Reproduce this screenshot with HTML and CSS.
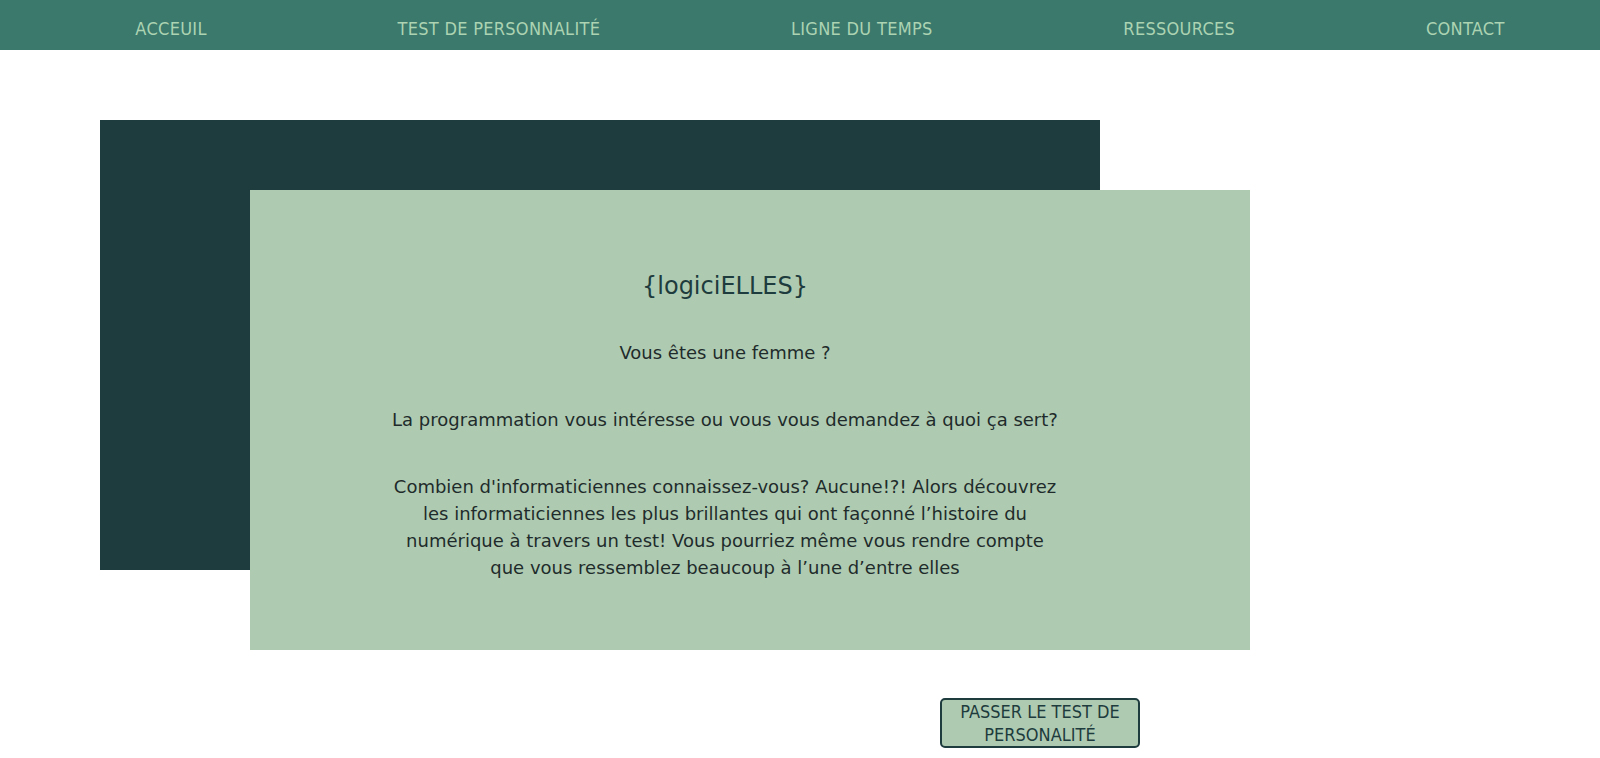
FILE: index.html
```html
<!DOCTYPE html>
<html lang="fr">
<head>
<meta charset="utf-8">
<title>logiciELLES</title>
<link rel="stylesheet" href="styles.css">
</head>
<body>
<nav class="topnav">
  <ul class="topnav-list">
    <li><a href="#">ACCEUIL</a></li>
    <li><a href="#">TEST DE PERSONNALITÉ</a></li>
    <li><a href="#">LIGNE DU TEMPS</a></li>
    <li><a href="#">RESSOURCES</a></li>
    <li><a href="#">CONTACT</a></li>
  </ul>
</nav>
<main class="hero">
  <div class="hero-back"></div>
  <section class="hero-card">
    <h1 class="hero-title">{logiciELLES}</h1>
    <p class="hero-text">Vous êtes une femme ?</p>
    <p class="hero-text">La programmation vous intéresse ou vous vous demandez à quoi ça sert?</p>
    <p class="hero-text">Combien d'informaticiennes connaissez-vous? Aucune!?! Alors découvrez les informaticiennes les plus brillantes qui ont façonné l’histoire du numérique à travers un test! Vous pourriez même vous rendre compte que vous ressemblez beaucoup à l’une d’entre elles</p>
  </section>
</main>
<div class="cta-row">
  <button class="cta">PASSER LE TEST DE PERSONALITÉ</button>
</div>
</body>
</html>
```
FILE: styles.css
```css
html, body {
  margin: 0;
  padding: 0;
  background: #ffffff;
}
body {
  font-family: "DejaVu Sans", Verdana, sans-serif;
}
.topnav {
  background: #3a796c;
  height: 50px;
}
.topnav-list {
  list-style: none;
  margin: 0;
  padding: 6px 0 0 40px;
  box-sizing: border-box;
  height: 50px;
  display: flex;
  justify-content: space-around;
  align-items: center;
}
.topnav-list a {
  font-family: "DejaVu Sans Condensed", "DejaVu Sans", sans-serif;
  font-size: 18px;
  letter-spacing: 0.3px;
  color: #acd3b2;
  text-decoration: none;
}
.hero {
  margin: 70px 0 0 100px;
  display: grid;
  grid-template-columns: 150px 850px 150px;
  grid-template-rows: 70px 380px 80px;
  width: 1150px;
}
.hero-back {
  grid-column: 1 / 3;
  grid-row: 1 / 3;
  background: #1e3b3d;
}
.hero-card {
  grid-column: 2 / 4;
  grid-row: 2 / 4;
  background: #aecbb2;
  padding: 82px 190px 0 140px;
  text-align: center;
  box-sizing: border-box;
}
.hero-title {
  margin: 0 0 38px;
  font-size: 24px;
  line-height: 29px;
  font-weight: normal;
  color: #1e3b3d;
}
.hero-text {
  margin: 0 0 40px;
  font-size: 18px;
  line-height: 27px;
  color: #1f2b2b;
}
.cta-row {
  display: flex;
  padding: 48px 0 0 940px;
}
.cta {
  width: 200px;
  font-family: "DejaVu Sans Condensed", "DejaVu Sans", sans-serif;
  font-size: 18px;
  line-height: 23px;
  color: #1e3b3d;
  background: #aecbb2;
  border: 2px solid #1e3b3d;
  border-radius: 5px;
  padding: 0 8px;
}
```
